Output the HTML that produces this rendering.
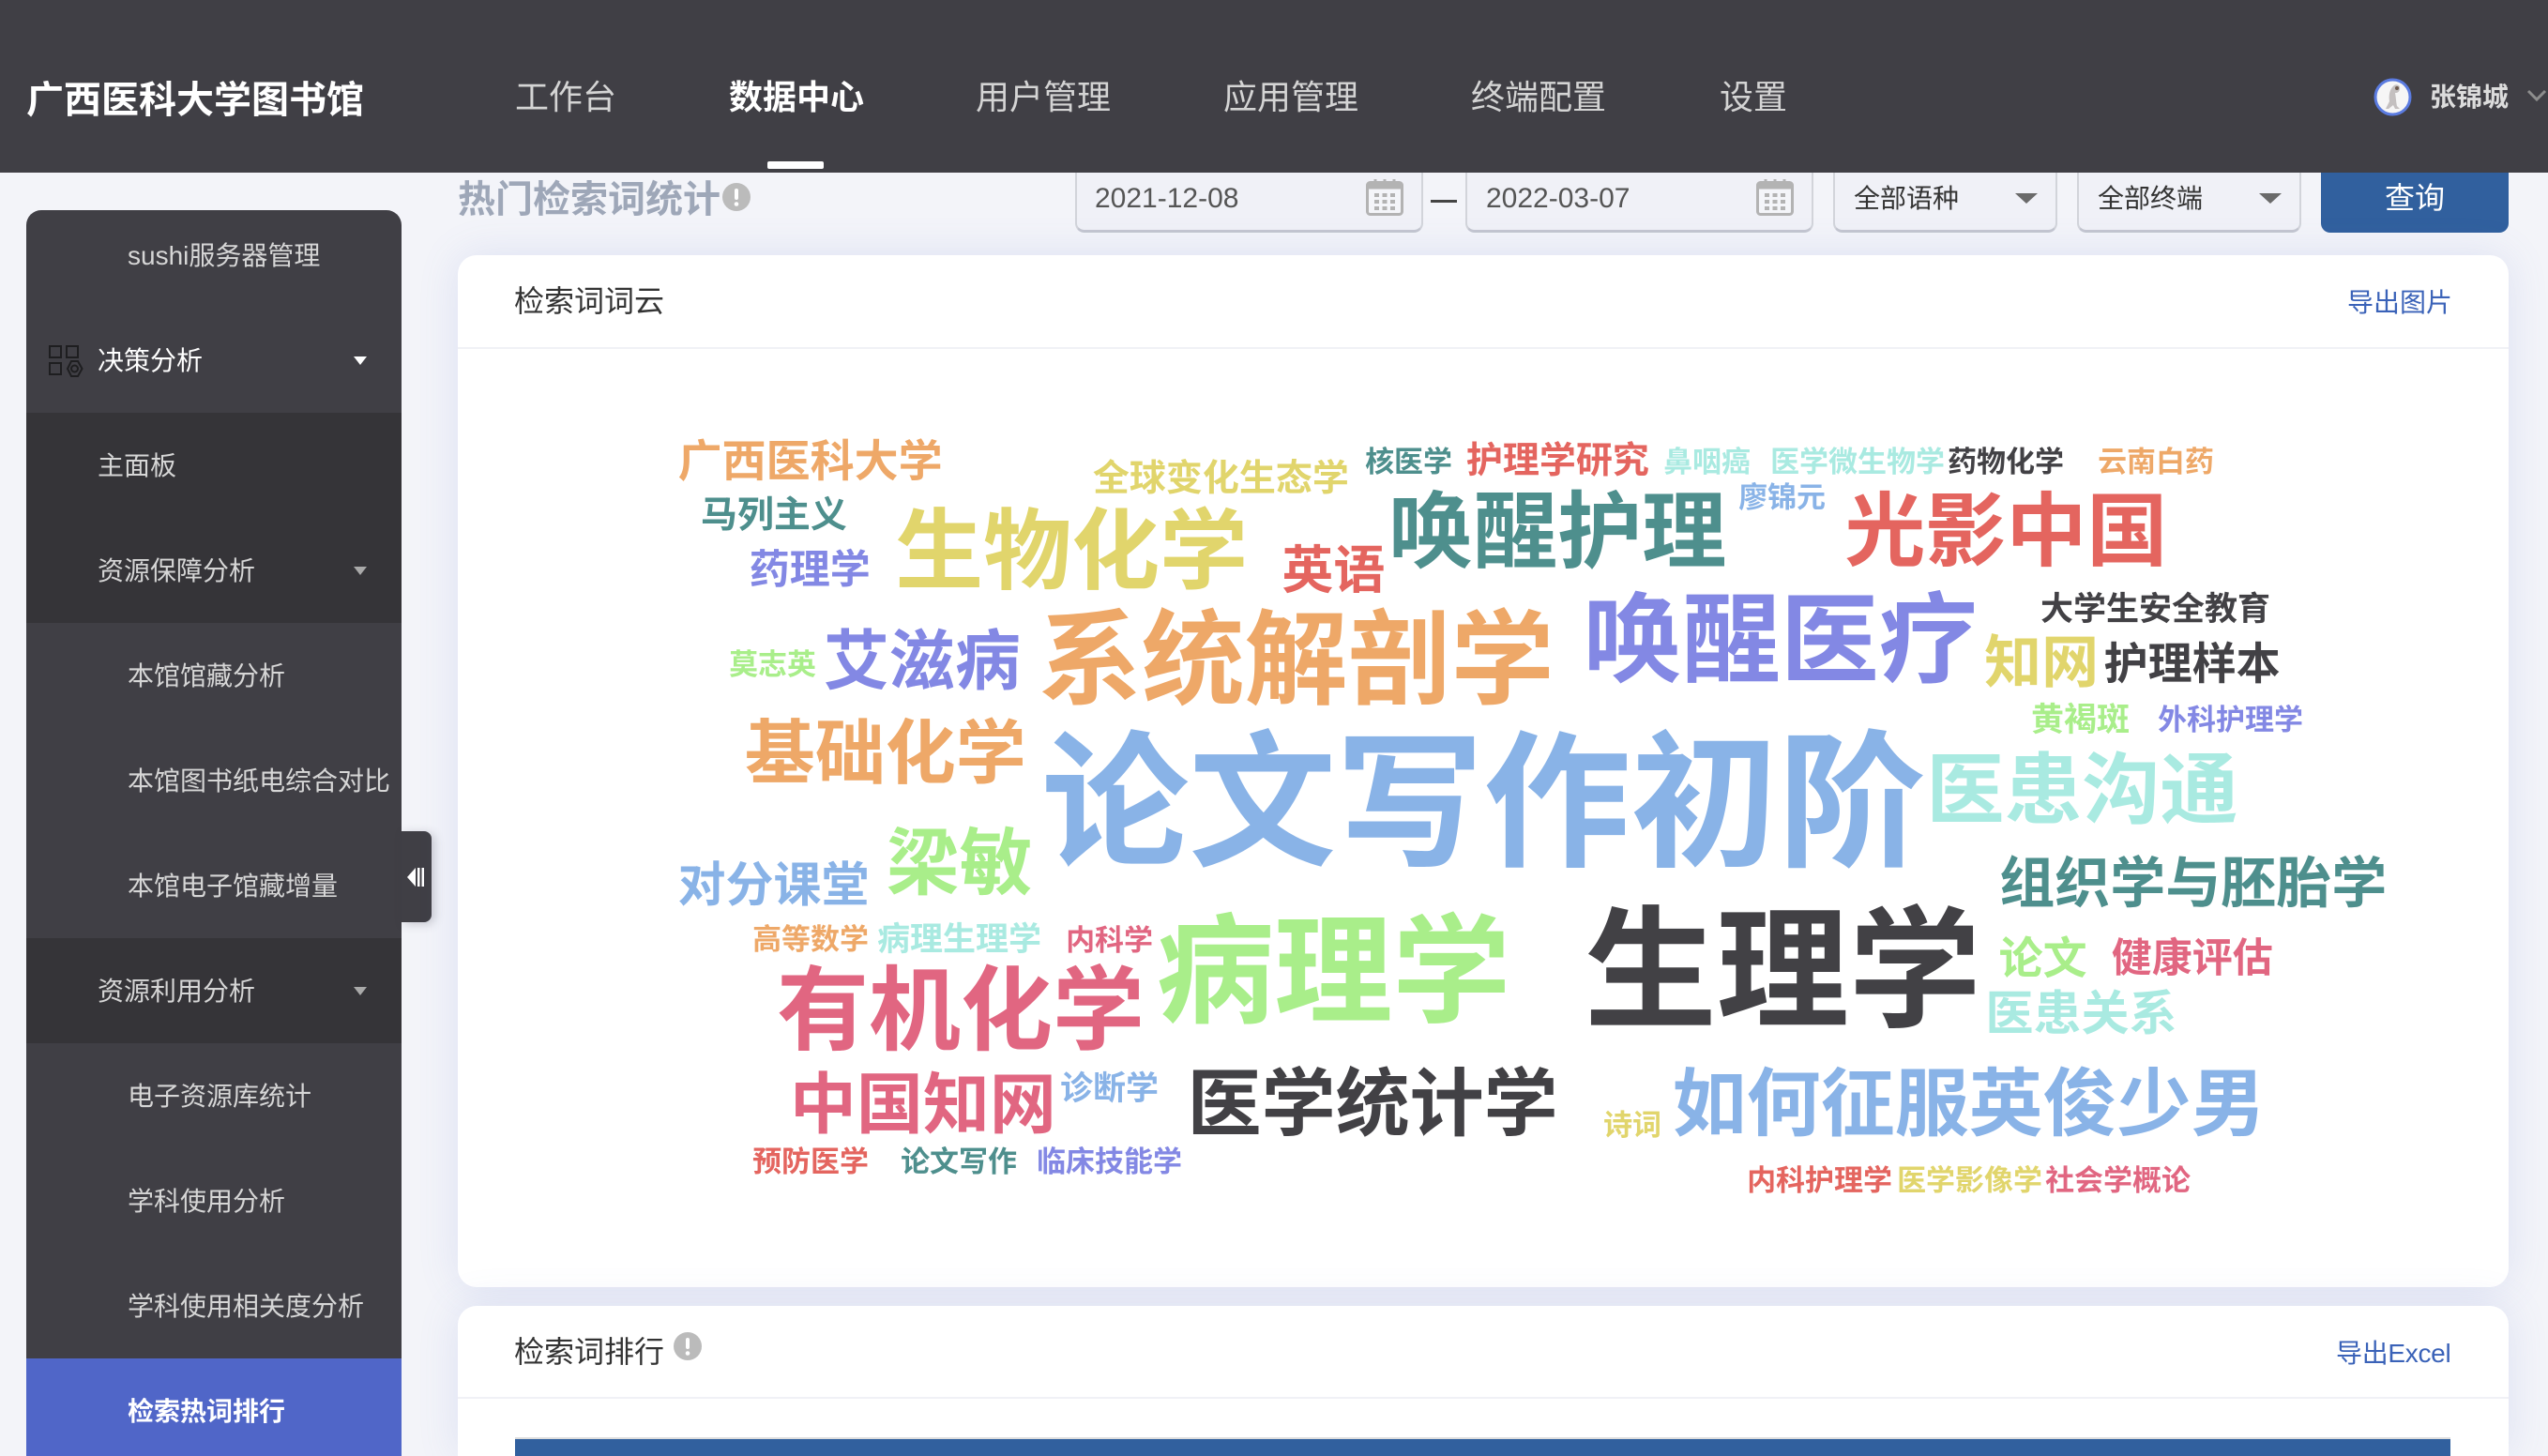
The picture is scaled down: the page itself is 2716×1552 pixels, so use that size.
<!DOCTYPE html>
<html lang="zh-CN">
<head>
<meta charset="utf-8">
<title>热门检索词统计</title>
<style>
html,body{margin:0;padding:0;width:2716px;height:1552px;overflow:hidden;background:#f3f4f9;font-family:"Liberation Sans","Noto Sans CJK SC",sans-serif}
*{box-sizing:border-box}
#root{position:relative;width:2716px;height:1552px;overflow:hidden;background:#f3f4f9}
.abs,.t{position:absolute}
.t{white-space:nowrap;line-height:1}
header{position:absolute;left:0;top:0;width:2716px;height:184px;background:#403f45;z-index:5}
.nav{font-size:36px;color:#d4d4d4;top:86px}
.side{position:absolute;left:28px;top:224px;width:400px;height:1328px;background:#403f45;border-radius:16px 16px 0 0;overflow:hidden}
.row{position:absolute;left:0;width:400px;height:112px}
.row span{position:absolute;top:43px;font-size:28px;line-height:28px;color:#d6d6d6;white-space:nowrap}
.l2 span{left:76px}.l3 span{left:108px}
.dk{background:#353438}
.tri{position:absolute;left:349px;top:52px;width:0;height:0;border-left:7px solid transparent;border-right:7px solid transparent;border-top:9px solid #a9a9a9}
.card{position:absolute;left:488px;width:2186px;background:#fff;border-radius:20px;box-shadow:0 0 44px rgba(95,115,205,.14)}
.hline{position:absolute;left:0;width:100%;height:2px;background:#f0f1f6}
.ctl{position:absolute;top:150px;height:98px;background:#f0f1f7;border:2px solid #d2d4da;border-bottom:3px solid #c4c7d0;border-radius:0 0 10px 10px}
.date{font-size:30px;color:#555;top:197px}
.sel{font-size:28px;color:#333;top:198px}
.arr{position:absolute;top:206px;width:0;height:0;border-left:12px solid transparent;border-right:12px solid transparent;border-top:11px solid #6a6a6a}
.w{position:absolute;white-space:nowrap;line-height:1;font-weight:700;left:calc(var(--x)*1px - .03em);top:calc(var(--c)*1px - .475em);font-size:calc(var(--s)*1px)}
.o{color:#eea868}.y{color:#e1d56c}.g{color:#4e8f8d}.r{color:#e4655f}.l{color:#a9ee8a}.c{color:#a9eae1}.p{color:#8388e4}.b{color:#89b3e7}.d{color:#424145}.k{color:#e16681}
</style>
</head>
<body>
<div id="root">

<div class="t" style="left:488px;top:193px;font-size:40px;font-weight:700;color:#9ea7b8">热门检索词统计</div>
<svg class="abs" style="left:770px;top:195px" width="30" height="30" viewBox="0 0 30 30"><circle cx="15" cy="15" r="15" fill="#bbb"/><rect x="13" y="6" width="4" height="12" rx="2" fill="#fff"/><circle cx="15" cy="22.500" r="2.300" fill="#fff"/></svg>

<div class="ctl" style="left:1146px;width:371px"></div>
<div class="t date" style="left:1167px">2021-12-08</div>
<svg class="abs" style="left:1456px;top:190px" width="40" height="40" viewBox="0 0 40 40"><rect x="1.500" y="4.500" width="37" height="34" rx="3" fill="#f4f5f9" stroke="#b3b3b3" stroke-width="3"/><rect x="1.500" y="4.500" width="37" height="7" fill="#b3b3b3"/><path d="M10 1v8M20 1v8M30 1v8" stroke="#b3b3b3" stroke-width="3"/><g fill="#b3b3b3"><rect x="9" y="16" width="5" height="4"/><rect x="17.500" y="16" width="5" height="4"/><rect x="26" y="16" width="5" height="4"/><rect x="9" y="23" width="5" height="4"/><rect x="17.500" y="23" width="5" height="4"/><rect x="26" y="23" width="5" height="4"/><rect x="9" y="30" width="5" height="4"/><rect x="17.500" y="30" width="5" height="4"/><rect x="26" y="30" width="5" height="4"/></g></svg>
<div class="abs" style="left:1525px;top:213px;width:28px;height:3px;background:#444"></div>
<div class="ctl" style="left:1562px;width:371px"></div>
<div class="t date" style="left:1584px">2022-03-07</div>
<svg class="abs" style="left:1872px;top:190px" width="40" height="40" viewBox="0 0 40 40"><rect x="1.500" y="4.500" width="37" height="34" rx="3" fill="#f4f5f9" stroke="#b3b3b3" stroke-width="3"/><rect x="1.500" y="4.500" width="37" height="7" fill="#b3b3b3"/><path d="M10 1v8M20 1v8M30 1v8" stroke="#b3b3b3" stroke-width="3"/><g fill="#b3b3b3"><rect x="9" y="16" width="5" height="4"/><rect x="17.500" y="16" width="5" height="4"/><rect x="26" y="16" width="5" height="4"/><rect x="9" y="23" width="5" height="4"/><rect x="17.500" y="23" width="5" height="4"/><rect x="26" y="23" width="5" height="4"/><rect x="9" y="30" width="5" height="4"/><rect x="17.500" y="30" width="5" height="4"/><rect x="26" y="30" width="5" height="4"/></g></svg>

<div class="ctl" style="left:1954px;width:239px"></div>
<div class="t sel" style="left:1976px">全部语种</div>
<div class="arr" style="left:2148px"></div>
<div class="ctl" style="left:2214px;width:239px"></div>
<div class="t sel" style="left:2236px">全部终端</div>
<div class="arr" style="left:2408px"></div>
<div class="abs" style="left:2474px;top:150px;width:200px;height:98px;background:#31609e;border-radius:0 0 10px 10px"></div>
<div class="t" style="left:2474px;width:200px;text-align:center;top:195px;font-size:32px;color:#fff">查询</div>

<header>
  <div class="t" style="left:28px;top:87px;font-size:40px;font-weight:700;color:#fff">广西医科大学图书馆</div>
  <div class="t nav" style="left:549px">工作台</div>
  <div class="t nav" style="left:777px;color:#fff;font-weight:700">数据中心</div>
  <div class="abs" style="left:818px;top:172px;width:60px;height:8px;background:#fff;border-radius:2px"></div>
  <div class="t nav" style="left:1040px">用户管理</div>
  <div class="t nav" style="left:1304px">应用管理</div>
  <div class="t nav" style="left:1568px">终端配置</div>
  <div class="t nav" style="left:1833px">设置</div>
  <svg class="abs" style="left:2530px;top:83px" width="41" height="41" viewBox="0 0 41 41"><circle cx="20.500" cy="20.500" r="18.500" fill="#f6f6f6" stroke="#5b7be0" stroke-width="3"/><path d="M22 8c3-2 7 0 6 4s-3 4-5 4c1 5 1 10 2 14l3 3h-5l-2-4-5 4h-3l4-8c-1-6 0-13 5-17z" fill="#c4c0c0"/><circle cx="25" cy="11" r="2" fill="#6d5a4e"/></svg>
  <div class="t" style="left:2590px;top:90px;font-size:28px;font-weight:700;color:#dcdcdc">张锦城</div>
  <svg class="abs" style="left:2693px;top:95px" width="23" height="14" viewBox="0 0 23 14"><path d="M2 2l9 9 9-9" fill="none" stroke="#8d8d8d" stroke-width="3"/></svg>
</header>

<div class="side">
  <div class="row l3" style="top:-8px"><span>sushi服务器管理</span></div>
  <div class="row l2" style="top:104px"><span style="color:#fff">决策分析</span><i class="tri" style="border-top-color:#fff"></i></div>
  <svg class="abs" style="left:22px;top:142px" width="40" height="38" viewBox="0 0 40 38"><g fill="none" stroke="#1e1e20" stroke-width="2"><rect x="3" y="3" width="12" height="12"/><rect x="21" y="3" width="12" height="12"/><rect x="3" y="21" width="12" height="12"/><path d="M24 19h7l4.500 8-4.500 8h-7l-4-8z" transform="translate(2 0)"/><circle cx="29.500" cy="27" r="3.500"/></g></svg>
  <div class="row l2 dk" style="top:216px"><span>主面板</span></div>
  <div class="row l2 dk" style="top:328px"><span>资源保障分析</span><i class="tri"></i></div>
  <div class="row l3" style="top:440px"><span>本馆馆藏分析</span></div>
  <div class="row l3" style="top:552px"><span>本馆图书纸电综合对比</span></div>
  <div class="row l3" style="top:664px"><span>本馆电子馆藏增量</span></div>
  <div class="row l2 dk" style="top:776px"><span>资源利用分析</span><i class="tri"></i></div>
  <div class="row l3" style="top:888px"><span>电子资源库统计</span></div>
  <div class="row l3" style="top:1000px"><span>学科使用分析</span></div>
  <div class="row l3" style="top:1112px"><span>学科使用相关度分析</span></div>
  <div class="row l3" style="top:1224px;background:#5066c8"><span style="color:#fff;font-weight:700">检索热词排行</span></div>
</div>
<div class="abs" style="left:428px;top:886px;width:32px;height:97px;background:#403f45;border-radius:0 8px 8px 0;box-shadow:3px 2px 10px rgba(60,60,80,.25)"></div>
<svg class="abs" style="left:433px;top:924px" width="20" height="22" viewBox="0 0 20 22"><path d="M10 1v20L1 11z" fill="#fff"/><rect x="12" y="1" width="2.500" height="20" fill="#fff"/><rect x="16.500" y="1" width="2.500" height="20" fill="#fff"/></svg>

<div class="card" style="top:272px;height:1100px">
  <div class="t" style="left:60px;top:33px;font-size:32px;color:#333">检索词词云</div>
  <div class="t" style="left:2014px;top:37px;font-size:28px;color:#3a62b8">导出图片</div>
  <div class="hline" style="top:98px"></div>
</div>

<div class="card" style="top:1392px;height:160px;border-radius:20px 20px 0 0">
  <div class="t" style="left:60px;top:33px;font-size:32px;color:#333">检索词排行</div>
  <svg class="abs" style="left:230px;top:28px" width="30" height="32" viewBox="0 0 30 32"><circle cx="15" cy="15" r="15" fill="#bbb"/><rect x="13" y="6" width="4" height="12" rx="2" fill="#fff"/><circle cx="15" cy="22.500" r="2.300" fill="#fff"/></svg>
  <div class="t" style="left:2002px;top:37px;font-size:28px;letter-spacing:-.3px;color:#3a62b8">导出Excel</div>
  <div class="hline" style="top:97px"></div>
  <div class="abs" style="left:61px;top:140px;width:2063px;height:2px;background:#ddd"></div>
  <div class="abs" style="left:61px;top:142px;width:2063px;height:18px;background:#31609e"></div>
</div>

<div class="w o" style="--x:724;--c:490;--s:47">广西医科大学</div>
<div class="w y" style="--x:1166;--c:510;--s:39">全球变化生态学</div>
<div class="w g" style="--x:1456;--c:492;--s:31">核医学</div>
<div class="w r" style="--x:1564;--c:491;--s:39">护理学研究</div>
<div class="w c" style="--x:1774;--c:492;--s:31">鼻咽癌</div>
<div class="w c" style="--x:1888;--c:492;--s:31">医学微生物学</div>
<div class="w d" style="--x:2077;--c:492;--s:31">药物化学</div>
<div class="w o" style="--x:2237;--c:492;--s:31">云南白药</div>
<div class="w g" style="--x:748;--c:549;--s:39">马列主义</div>
<div class="w y" style="--x:957;--c:586;--s:94">生物化学</div>
<div class="w r" style="--x:1368;--c:607;--s:55">英语</div>
<div class="w g" style="--x:1483;--c:566;--s:90">唤醒护理</div>
<div class="w b" style="--x:1854;--c:530;--s:31">廖锦元</div>
<div class="w r" style="--x:1969;--c:565;--s:86">光影中国</div>
<div class="w p" style="--x:800;--c:607;--s:43">药理学</div>
<div class="w l" style="--x:778;--c:708;--s:31">莫志英</div>
<div class="w p" style="--x:880;--c:703;--s:70">艾滋病</div>
<div class="w o" style="--x:1110;--c:702;--s:110">系统解剖学</div>
<div class="w p" style="--x:1691;--c:681;--s:105">唤醒医疗</div>
<div class="w d" style="--x:2176;--c:649;--s:35">大学生安全教育</div>
<div class="w y" style="--x:2117;--c:705;--s:61">知网</div>
<div class="w d" style="--x:2244;--c:706;--s:47">护理样本</div>
<div class="w l" style="--x:2166;--c:767;--s:35">黄褐斑</div>
<div class="w p" style="--x:2301;--c:767;--s:31">外科护理学</div>
<div class="w o" style="--x:796;--c:802;--s:75">基础化学</div>
<div class="w b" style="--x:1115;--c:854;--s:157">论文写作初阶</div>
<div class="w c" style="--x:2056;--c:840;--s:83">医患沟通</div>
<div class="w b" style="--x:724;--c:942;--s:51">对分课堂</div>
<div class="w l" style="--x:947;--c:918;--s:78">梁敏</div>
<div class="w g" style="--x:2133;--c:941;--s:59">组织学与胚胎学</div>
<div class="w o" style="--x:803;--c:1001;--s:31">高等数学</div>
<div class="w c" style="--x:936;--c:1001;--s:35">病理生理学</div>
<div class="w k" style="--x:1137;--c:1002;--s:31">内科学</div>
<div class="w l" style="--x:1236;--c:1034;--s:126">病理学</div>
<div class="w d" style="--x:1693;--c:1032;--s:141">生理学</div>
<div class="w l" style="--x:2132;--c:1020;--s:47">论文</div>
<div class="w k" style="--x:2252;--c:1021;--s:43">健康评估</div>
<div class="w k" style="--x:831;--c:1075;--s:98">有机化学</div>
<div class="w c" style="--x:2118;--c:1079;--s:51">医患关系</div>
<div class="w k" style="--x:844;--c:1177;--s:71">中国知网</div>
<div class="w b" style="--x:1131;--c:1160;--s:35">诊断学</div>
<div class="w d" style="--x:1268;--c:1175;--s:79">医学统计学</div>
<div class="w y" style="--x:1710;--c:1199;--s:31">诗词</div>
<div class="w b" style="--x:1785;--c:1175;--s:79">如何征服英俊少男</div>
<div class="w r" style="--x:803;--c:1238;--s:31">预防医学</div>
<div class="w g" style="--x:961;--c:1238;--s:31">论文写作</div>
<div class="w p" style="--x:1106;--c:1238;--s:31">临床技能学</div>
<div class="w r" style="--x:1863;--c:1258;--s:31">内科护理学</div>
<div class="w y" style="--x:2023;--c:1258;--s:31">医学影像学</div>
<div class="w k" style="--x:2181;--c:1258;--s:31">社会学概论</div>

</div>
</body>
</html>
